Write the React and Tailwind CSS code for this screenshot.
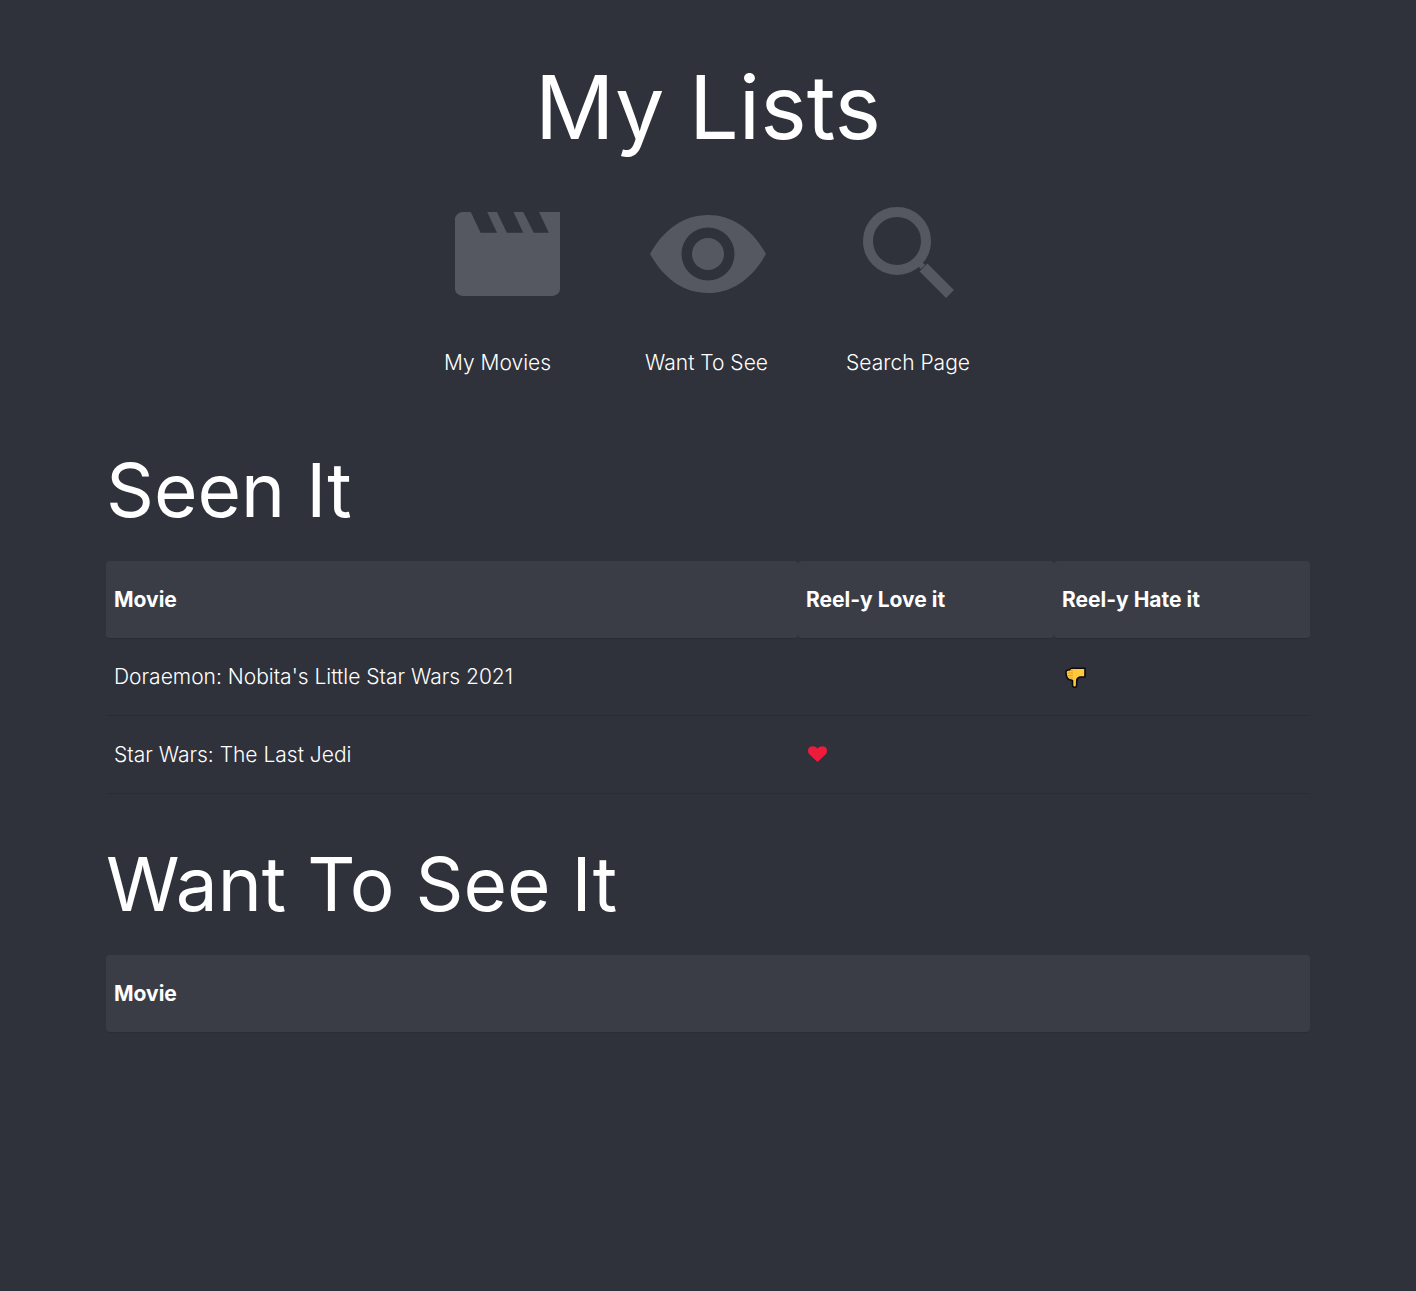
import React from 'react';

const ClapperIcon = () => (
  <svg viewBox="0 0 300 252" preserveAspectRatio="none" className="mr-[2px] h-[84px] w-[105px] fill-[#555861]">
    <path d="M22 0H45L73 62H120L92 0H120L148 62H195L167 0H195L225 62H268L240 0H300V230A22 22 0 0 1 278 252H22A22 22 0 0 1 0 230V22A22 22 0 0 1 22 0Z" />
  </svg>
);

const EyeIcon = () => (
  <svg viewBox="0 0 116 78" className="h-[78px] w-[116px] fill-[#555861]">
    <path
      fillRule="evenodd"
      d="M0 39C14 14 34 0 58 0C82 0 102 14 116 39C102 64 82 78 58 78C34 78 14 64 0 39ZM58 12.500A26.500 26.500 0 1 0 58 65.500A26.500 26.500 0 1 0 58 12.500Z"
    />
    <circle cx="58" cy="39" r="16" />
  </svg>
);

const SearchIcon = () => (
  <svg viewBox="0 0 91 91" className="mb-[4px] h-[91px] w-[91px] fill-none stroke-[#555861]">
    <circle cx="34" cy="34" r="29" strokeWidth="10" />
    <path d="M54 54L60 60" strokeWidth="6" />
    <path d="M60.500 60.500L87 87" strokeWidth="11" />
  </svg>
);

const ThumbDown = () => (
  <svg viewBox="0 0 21 21" className="block h-[21px] w-[21px]">
    <path
      d="M20 1.200H7C5.500 1.200 5 2 4.500 3H3C1.500 3 0.800 4.200 1 6C1.200 9 2 11.500 4 12.500L7.500 13.500V18C7.500 19.500 8.500 20.300 9.700 20.300C11 20.300 11.700 19.200 11.700 18V14C11.700 12 13 10.500 15 10H20Z"
      fill="#ffc83d"
      stroke="#0b0b0b"
      strokeWidth="1.600"
      strokeLinejoin="round"
    />
    <path d="M2.500 6H8M3 8.500H8M4 11H8M5.500 3.600H8" stroke="#e0982a" strokeWidth="0.900" fill="none" />
  </svg>
);

const Heart = () => (
  <svg viewBox="0 0 19 16" className="block h-4 w-[19px] fill-[#ed1c3c]">
    <path d="M9.500 16L1.500 8.500C-0.500 6.500 -0.500 3 1.500 1.300C3.500 -0.500 7 -0.300 9.500 2.500C12 -0.300 15.500 -0.500 17.500 1.300C19.500 3 19.500 6.500 17.500 8.500Z" />
  </svg>
);

const navItems = [
  { label: 'My Movies', icon: <ClapperIcon />, labelClass: 'mr-[21px]' },
  { label: 'Want To See', icon: <EyeIcon />, labelClass: 'mr-[3px]' },
  { label: 'Search Page', icon: <SearchIcon />, labelClass: '' },
];

const thClass = 'h-[78px] rounded-[4px] border-b border-[#2a2d35] bg-[#3a3d46] px-2 text-left text-[21px] font-bold';
const tdClass = 'border-b border-[#292c34] px-2 align-middle';

export default function App() {
  return (
    <div className="min-h-screen bg-[#2f323b] px-[106px] pt-[57px] font-['Inter',sans-serif] text-white font-light">
      <h1 className="text-center text-[88px] leading-[100px] font-normal">My Lists</h1>

      <div className="mt-[47px] flex justify-center">
        {navItems.map((item) => (
          <div key={item.label} className="flex w-[200px] flex-col items-center">
            <div className="flex h-[100px] items-center justify-center">{item.icon}</div>
            <span className={`mt-[45px] text-[21px] leading-[28px] ${item.labelClass}`}>{item.label}</span>
          </div>
        ))}
      </div>

      <h2 className="mt-[69px] text-[74.700px] leading-[88px] font-normal">Seen It</h2>
      <table className="mt-[27px] w-full table-fixed border-separate border-spacing-0 text-[21px]">
        <thead>
          <tr>
            <th className={`${thClass} w-[692px]`}>Movie</th>
            <th className={`${thClass} w-[256px]`}>Reel-y Love it</th>
            <th className={thClass}>Reel-y Hate it</th>
          </tr>
        </thead>
        <tbody>
          <tr className="h-[77px]">
            <td className={tdClass}>Doraemon: Nobita's Little Star Wars 2021</td>
            <td className={tdClass}></td>
            <td className={tdClass}>
              <span className="ml-[3px] block w-fit"><ThumbDown /></span>
            </td>
          </tr>
          <tr className="h-[78px]">
            <td className={tdClass}>Star Wars: The Last Jedi</td>
            <td className={tdClass}>
              <span className="mb-[2px] ml-[2px] block w-fit"><Heart /></span>
            </td>
            <td className={tdClass}></td>
          </tr>
        </tbody>
      </table>

      <h2 className="mt-[46px] text-[74.700px] leading-[88px] font-normal">Want To See It</h2>
      <table className="mt-[27px] w-full border-separate border-spacing-0 text-[21px]">
        <thead>
          <tr>
            <th className={thClass}>Movie</th>
          </tr>
        </thead>
      </table>
    </div>
  );
}
